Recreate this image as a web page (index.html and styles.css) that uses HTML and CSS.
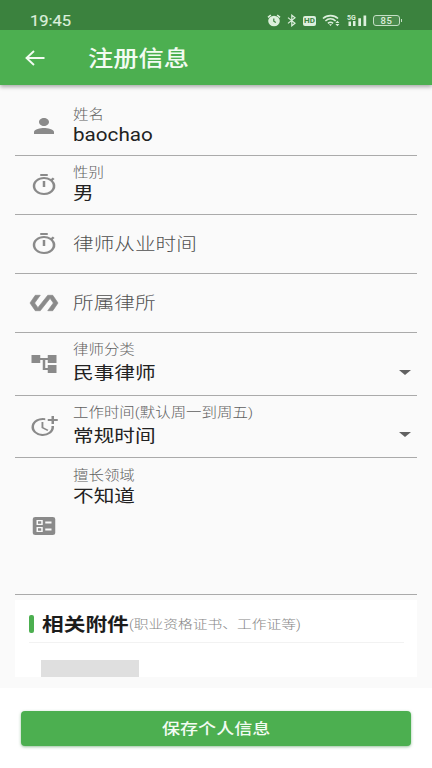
FILE: index.html
```html
<!DOCTYPE html>
<html lang="zh-CN">
<head>
<meta charset="utf-8">
<title>注册信息</title>
<link rel="stylesheet" href="styles.css">
</head>
<body>
<svg class="defs" width="0" height="0">
  <symbol id="timer" viewBox="0 0 24 24" preserveAspectRatio="none"><path d="M15 1H9v2h6V1zm-4 13h2V8h-2v6zm8.03-6.61 1.42-1.42c-.43-.51-.9-.99-1.41-1.41l-1.42 1.42A8.96 8.96 0 0 0 12 4c-4.97 0-9 4.03-9 9s4.02 9 9 9a8.99 8.99 0 0 0 7.03-14.61zM12 20c-3.87 0-7-3.13-7-7s3.13-7 7-7 7 3.13 7 7-3.13 7-7 7z"/></symbol>
</svg>
<header>
  <div class="status">
    <span class="clock wide">19:45</span>
    <div class="indicators">
      <svg width="14" height="13" viewBox="0 0 14 13"><ellipse cx="7" cy="7" rx="5.8" ry="5.3" fill="#dcefdc"/><path d="M1 3.4 3.8 1M13 3.4 10.2 1" stroke="#dcefdc" stroke-width="1.6"/><path d="M6.8 4.4V7.2L8.8 8.6" fill="none" stroke="#3b823e" stroke-width="1.2"/></svg>
      <svg width="10" height="13" viewBox="0 0 10 13"><path d="M1 3.6 8 9.2 4.8 11.8V1.2L8 3.8 1 9.4" fill="none" stroke="#dcefdc" stroke-width="1.2"/></svg>
      <span class="hd">HD</span>
      <svg width="19" height="13" viewBox="0 0 19 13"><path d="M1 4.5C5 .6 12 .6 16 4.5M3.4 7C6.4 4.2 10.6 4.2 13.6 7M5.9 9.3C7.5 8 9.5 8 11.1 9.3" fill="none" stroke="#dcefdc" stroke-width="1.6"/><path d="M7 10.3h3L8.5 12zM13.4 9 15.4 6.8 17.4 9zM13.4 10h4l-2 2.2z" fill="#dcefdc"/></svg>
      <svg class="signal" width="20" height="13" viewBox="0 0 20 13"><text x="0" y="5.8" class="net">5G</text><path d="M1.5 7.5H4V12H1.5zM6 7H8.500V12H6zM11.300 4.200H14V12H11.300zM16.500 1.400H19.200V12H16.500z" fill="#dcefdc"/></svg>
      <span class="battery">85</span>
    </div>
  </div>
  <div class="appbar">
    <svg class="back" viewBox="0 0 20 16" width="20" height="16"><path d="M19.5 8H1.5M9 1 1.5 8 9 15" fill="none" stroke="#f2fbf2" stroke-width="1.9"/></svg>
    <h1 class="wide">注册信息</h1>
  </div>
</header>
<main>
  <section class="field first">
    <svg class="icon" viewBox="0 0 24 24" preserveAspectRatio="none"><path d="M12 12c2.21 0 4-1.79 4-4s-1.79-4-4-4-4 1.79-4 4 1.79 4 4 4zm0 2c-2.67 0-8 1.34-8 4v2h16v-2c0-2.66-5.33-4-8-4z"/></svg>
    <div class="copy"><span class="label wide">姓名</span><span class="value wide">baochao</span></div>
  </section>
  <section class="field">
    <svg class="icon"><use href="#timer"/></svg>
    <div class="copy"><span class="label wide">性别</span><span class="value wide">男</span></div>
  </section>
  <section class="field">
    <svg class="icon"><use href="#timer"/></svg>
    <span class="hint wide">律师从业时间</span>
  </section>
  <section class="field">
    <svg class="icon heavy" viewBox="0 0 24 24" preserveAspectRatio="none"><path d="M19 4.300h-4L7.110 16.630 4.500 12 9 4.300H5L.8 12 5 19.700h4l7.890-12.330L19.500 12 15 19.700h4l4.200-7.700z"/></svg>
    <span class="hint wide">所属律所</span>
  </section>
  <section class="field select">
    <svg class="icon" viewBox="0 0 24 24" preserveAspectRatio="none"><path d="M22 11V3h-7v3H9V3H2v8h7V8h2v10h4v3h7v-8h-7v3h-2V8h2v3z"/></svg>
    <div class="copy"><span class="label wide">律师分类</span><span class="value wide">民事律师</span></div>
    <span class="caret"></span>
  </section>
  <section class="field select">
    <svg class="icon" viewBox="0 0 24 24" preserveAspectRatio="none"><path d="M10 8v6l4.7 2.9.8-1.2-4-2.4V8zM17.92 12c.05.33.08.66.08 1 0 3.9-3.1 7-7 7s-7-3.1-7-7 3.1-7 7-7c.7 0 1.37.1 2 .29V4.23A9 9 0 1 0 20 13c0-.34-.02-.67-.06-1h-2.02zM20 5V2h-2v3h-3v2h3v3h2V7h3V5h-3z"/></svg>
    <div class="copy"><span class="label wide">工作时间(默认周一到周五)</span><span class="value wide">常规时间</span></div>
    <span class="caret"></span>
  </section>
  <section class="field area">
    <svg class="icon" viewBox="0 0 24 24" preserveAspectRatio="none"><path fill-rule="evenodd" d="M19 3H5a2 2 0 0 0-2 2v14a2 2 0 0 0 2 2h14a2 2 0 0 0 2-2V5a2 2 0 0 0-2-2zM13 7.5h5v2h-5zM13 14.5h5v2h-5zM6 6h5v5H6zM7.200 7.200v2.600h2.600v-2.600zM6 13h5v5H6zM7.200 14.200v2.600h2.600v-2.600z"/></svg>
    <div class="copy"><span class="label wide">擅长领域</span><span class="value wide">不知道</span></div>
  </section>
  <section class="card">
    <div class="card-head">
      <i class="mark"></i>
      <h2><span class="wide">相关附件</span></h2>
      <small class="wide">(职业资格证书、工作证等)</small>
    </div>
    <div class="thumb"></div>
  </section>
</main>
<footer><button><span class="wide">保存个人信息</span></button></footer>
</body>
</html>
```

FILE: styles.css
```css
* { box-sizing: border-box; }
body {
  margin: 0;
  width: 432px;
  height: 768px;
  overflow: hidden;
  display: flex;
  flex-direction: column;
  background: #fff;
  font-family: Roboto, "Noto Sans CJK SC", sans-serif;
}
.defs { display: none; }
/* Horizontally expanded lettering */
.wide {
  display: block;
  width: max-content;
  white-space: nowrap;
  transform: scaleX(1.18);
  transform-origin: 0 50%;
}
header {
  position: relative;
  height: 85px;
  flex: none;
  background: #4caf50;
  box-shadow: 0 2px 4px rgba(0,0,0,.32);
}
.status {
  height: 30px;
  padding: 10px 32px 0 29.5px;
  display: flex;
  justify-content: space-between;
  background: #3b823e;
}
.clock { font-size: 14px; line-height: 22px; color: #dcefdc; -webkit-text-stroke: .2px #dcefdc; }
.indicators { height: 21px; display: flex; align-items: center; gap: 6px; }
.indicators svg { flex: none; }
.hd {
  width: 13px;
  height: 10px;
  border-radius: 2px;
  background: #dcefdc;
  color: #3b823e;
  font: bold 8px/10px Roboto, sans-serif;
  text-align: center;
}
.net { font: bold 7px Roboto, sans-serif; fill: #dcefdc; }
.signal { overflow: visible; }
.battery {
  position: relative;
  width: 27px;
  height: 11px;
  border: 1px solid #c4dfc5;
  border-radius: 3px;
  background: #4b8c4e;
  color: #dcefdc;
  font: 500 9.5px/9.5px Roboto, sans-serif;
  letter-spacing: .6px;
  text-align: center;
}
.battery::after {
  content: "";
  position: absolute;
  right: -3px;
  top: 3px;
  width: 1px;
  height: 3px;
  background: #c4dfc5;
}
.appbar { height: 55px; display: flex; align-items: center; padding-left: 24.5px; }
.back { margin-right: 43.5px; }
h1 { margin: 2px 0 0; font-size: 21.4px; font-weight: 500; line-height: 30px; color: #f2fbf2; }
main { height: 603px; flex: none; padding: 11px 15px 0; background: #fafafa; }
.field {
  height: 59px;
  display: flex;
  align-items: center;
  padding-left: 14px;
  border-bottom: 1px solid #aaa;
}
.first { height: 60px; }
.icon { width: 30px; height: 24px; flex: none; margin-right: 14px; fill: #8a8a8a; }
.heavy { stroke: #8a8a8a; stroke-width: .6; }
.copy { flex: 1; align-self: flex-start; padding-top: 8px; }
.first .copy { padding-top: 10px; }
.label { font-size: 13.1px; line-height: 18px; color: #606060; font-weight: 300; }
.value { font-size: 17.5px; line-height: 22px; color: #222; }
.hint { font-size: 17.5px; line-height: 24px; margin-top: -1px; color: #505050; font-weight: 300; }
.select { height: 62.5px; }
.select .value { margin-top: 3px; }
.caret {
  margin: 17px 6px 0 0;
  border: 6px solid transparent;
  border-top: 5px solid #616161;
  border-bottom: 0;
}
.area { height: 137px; }
.area .copy { padding-top: 9px; }
.card { height: 77px; margin-top: 5px; padding: 0 13px 0 14px; background: #fff; }
.card-head { height: 43px; display: flex; align-items: center; padding-top: 5px; border-bottom: 1px solid #f2f2f2; }
.mark { width: 5px; height: 18px; margin-right: 8px; border-radius: 2px; background: #4caf50; }
h2 { width: 87px; margin: 2px 0 0; font-size: 18.4px; line-height: 26px; font-weight: 700; color: #1c1c1c; }
small { margin-top: 2px; font-size: 12.5px; line-height: 18px; color: #858585; font-weight: 300; }
.thumb { width: 98px; height: 17px; margin: 17px 0 0 12px; background: #dfdfdf; }
footer { height: 80px; padding: 23px 21px 0; }
button {
  display: block;
  width: 390px;
  height: 35px;
  padding: 1px 0 0 141px;
  border: 0;
  border-radius: 4px;
  background: #4caf50;
  box-shadow: 0 1px 3px rgba(50,130,60,.5);
  color: #f2fbf2;
  font: 500 15.3px/34px Roboto, "Noto Sans CJK SC", sans-serif;
  text-align: left;
}
```
